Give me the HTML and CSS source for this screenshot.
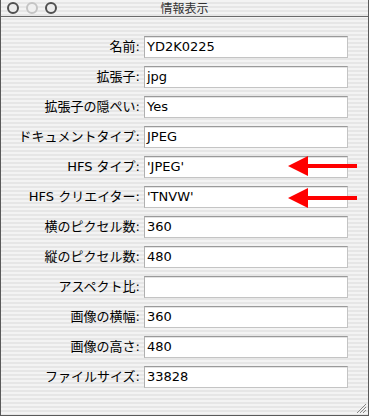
FILE: index.html
```html
<!DOCTYPE html>
<html lang="ja">
<head>
  <meta charset="UTF-8">
  <title>情報表示</title>
  <link rel="stylesheet" href="styles.css">
</head>
<body>

<div class="window">
  <!-- Title bar -->
  <div class="titlebar">
    <div class="lights">
      <span class="light"></span>
      <span class="light light-off"></span>
      <span class="light"></span>
    </div>
    <span class="title">情報表示</span>
  </div>

  <!-- Info rows -->
  <div class="info-grid">
    <label>名前:</label>
    <div class="field">YD2K0225</div>

    <label>拡張子:</label>
    <div class="field">jpg</div>

    <label>拡張子の隠ぺい:</label>
    <div class="field">Yes</div>

    <label>ドキュメントタイプ:</label>
    <div class="field">JPEG</div>

    <label>HFS タイプ:</label>
    <div class="field has-arrow">'JPEG'
      <svg class="arrow" width="70" height="22" viewBox="0 0 70 22">
        <polygon points="0,11 20,1 20,9 69,9 69,13 20,13 20,21" fill="#ff0000"/>
      </svg>
    </div>

    <label>HFS クリエイター:</label>
    <div class="field has-arrow">'TNVW'
      <svg class="arrow arrow-low" width="70" height="22" viewBox="0 0 70 22">
        <polygon points="0,11 20,1 20,9 69,9 69,13 20,13 20,21" fill="#ff0000"/>
      </svg>
    </div>

    <label>横のピクセル数:</label>
    <div class="field">360</div>

    <label>縦のピクセル数:</label>
    <div class="field">480</div>

    <label>アスペクト比:</label>
    <div class="field"></div>

    <label>画像の横幅:</label>
    <div class="field">360</div>

    <label>画像の高さ:</label>
    <div class="field">480</div>

    <label>ファイルサイズ:</label>
    <div class="field">33828</div>
  </div>

  <svg class="grip" width="12" height="12" viewBox="0 0 12 12">
    <line x1="11" y1="2" x2="2" y2="11" stroke="#888" stroke-width="1"/>
    <line x1="11" y1="5" x2="5" y2="11" stroke="#888" stroke-width="1"/>
    <line x1="11" y1="8" x2="8" y2="11" stroke="#888" stroke-width="1"/>
  </svg>
</div>

</body>
</html>
```

FILE: styles.css
```css
html, body {
  margin: 0;
  padding: 0;
  background: #fff;
}
.window {
  position: relative;
  width: 369px;
  height: 416px;
  box-sizing: border-box;
  border: 1px solid #5a5a5a;
  border-top: none;
  background: repeating-linear-gradient(to bottom, #f3f3f3 0, #f3f3f3 2px, #e6e6e6 2px, #e6e6e6 4px);
  font-family: "DejaVu Sans", "Noto Sans CJK JP", sans-serif;
  font-size: 13px;
  color: #000;
}
.titlebar {
  position: relative;
  height: 16px;
  border-bottom: 1px solid #6a6a6a;
  display: flex;
  align-items: center;
  justify-content: center;
}
.lights {
  position: absolute;
  left: 6px;
  top: 2px;
  display: flex;
  gap: 7px;
}
.light {
  width: 12px;
  height: 12px;
  box-sizing: border-box;
  border: 2px solid #505050;
  border-radius: 50%;
  background: #ececec;
}
.light-off {
  border-color: #c4c4c4;
  background: #f0f0f0;
}
.title {
  font-size: 12px;
  color: #333;
  font-family: "Noto Sans CJK JP", sans-serif;
  line-height: 16px;
}
.info-grid {
  display: grid;
  grid-template-columns: 139px 204px;
  column-gap: 4px;
  row-gap: 8px;
  padding-top: 19px;
}
.info-grid label {
  text-align: right;
  line-height: 22px;
  white-space: nowrap;
}
.field {
  position: relative;
  height: 22px;
  box-sizing: border-box;
  background: #fff;
  border: 1px solid #c4c4c4;
  border-top-color: #9a9a9a;
  border-left-color: #b0b0b0;
  box-shadow: inset 0 1px 0 #e4e4e4;
  padding-left: 2px;
  line-height: 20px;
}
.arrow {
  position: absolute;
  left: 143px;
  top: -2px;
}
.arrow-low {
  top: 0;
}
.grip {
  position: absolute;
  right: 1px;
  bottom: 1px;
}
```
